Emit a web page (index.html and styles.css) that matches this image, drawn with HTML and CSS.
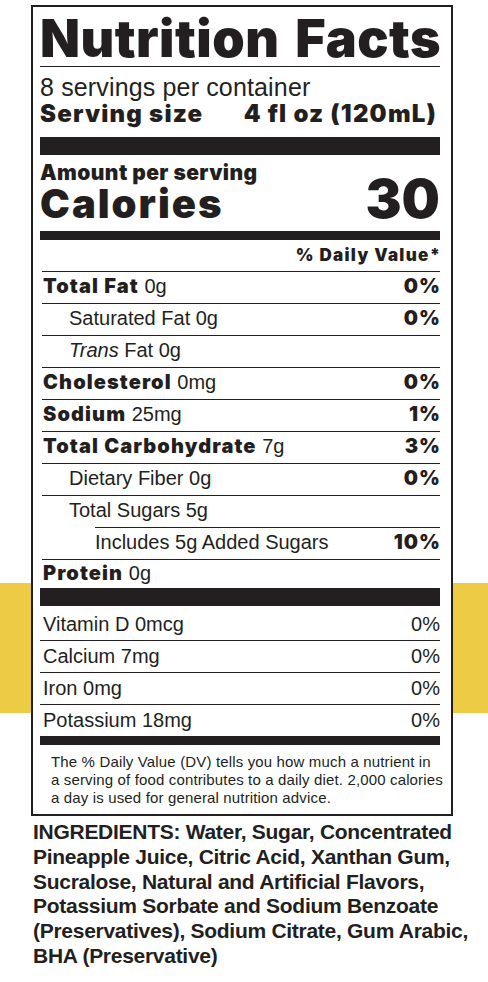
FILE: index.html
```html
<!DOCTYPE html>
<html lang="en">
<head>
<meta charset="utf-8">
<title>Nutrition Facts</title>
<link rel="stylesheet" href="styles.css">
</head>
<body>
<div class="label">
  <h1 class="title">Nutrition Facts</h1>
  <div class="servings">8 servings per container</div>
  <div class="serving-size"><span>Serving size</span><span>4 fl oz (120mL)</span></div>
  <div class="bar bar-thick"></div>
  <div class="amount">Amount per serving</div>
  <div class="calories"><span class="cal-label">Calories</span><span class="cal-value">30</span></div>
  <div class="bar bar-med"></div>
  <div class="dv-head"><span>% Daily Value*</span></div>
  <div class="nutrients">
    <div class="row"><span><b class="hv">Total Fat</b> 0g</span><b class="hv pct">0%</b></div>
    <div class="row sub"><span>Saturated Fat 0g</span><b class="hv pct">0%</b></div>
    <div class="row sub"><span><i>Trans</i> Fat 0g</span></div>
    <div class="row"><span><b class="hv">Cholesterol</b> 0mg</span><b class="hv pct">0%</b></div>
    <div class="row"><span><b class="hv">Sodium</b> 25mg</span><b class="hv pct">1%</b></div>
    <div class="row"><span><b class="hv">Total Carbohydrate</b> 7g</span><b class="hv pct">3%</b></div>
    <div class="row sub"><span>Dietary Fiber 0g</span><b class="hv pct">0%</b></div>
    <div class="row sub"><span>Total Sugars 5g</span></div>
    <div class="row sub2"><span>Includes 5g Added Sugars</span><b class="hv pct">10%</b></div>
    <div class="row last"><span><b class="hv">Protein</b> 0g</span></div>
  </div>
  <div class="bar bar-thick"></div>
  <div class="vitamins">
    <div class="vrow first"><span>Vitamin D 0mcg</span><span>0%</span></div>
    <div class="vrow"><span>Calcium 7mg</span><span>0%</span></div>
    <div class="vrow"><span>Iron 0mg</span><span>0%</span></div>
    <div class="vrow"><span>Potassium 18mg</span><span>0%</span></div>
  </div>
  <div class="bar bar-med"></div>
  <p class="footnote">The % Daily Value (DV) tells you how much a nutrient in<br>a serving of food contributes to a daily diet. 2,000 calories<br>a day is used for general nutrition advice.</p>
</div>
<p class="ingredients">INGREDIENTS: Water, Sugar, Concentrated<br>Pineapple Juice, Citric Acid, Xanthan Gum,<br>Sucralose, Natural and Artificial Flavors,<br>Potassium Sorbate and Sodium Benzoate<br>(Preservatives), Sodium Citrate, Gum Arabic,<br>BHA (Preservative)</p>
</body>
</html>
```
FILE: styles.css
```css
* { box-sizing: border-box; }
html, body { margin: 0; padding: 0; }
body {
  width: 488px;
  min-height: 982px;
  color: #231f20;
  font-family: "Liberation Sans", Arial, sans-serif;
  background: linear-gradient(to bottom, #ffffff 0, #ffffff 583px, #eecb45 583px, #eecb45 713px, #ffffff 713px);
  padding-top: 5px;
}
.label {
  margin-left: 31px;
  width: 422px;
  border: 2px solid #231f20;
  background: #fff;
  padding: 0 11px 7px 7px;
}
.title, .serving-size, .amount, .calories, .dv-head, .hv {
  font-family: "Inter", "Roboto", "Liberation Sans", sans-serif;
  font-weight: 900;
}
.title {
  margin: 0;
  padding-top: 4px;
  font-size: 52px;
  line-height: 55px;
  letter-spacing: 0.5px;
  word-spacing: 5px;
  border-bottom: 1px solid #231f20;
  white-space: nowrap;
}
.servings {
  padding-top: 5px;
  font-size: 25px;
  line-height: 30px;
  letter-spacing: 0.15px;
}
.serving-size {
  display: flex;
  justify-content: space-between;
  padding-right: 3px;
  font-size: 24px;
  line-height: 24px;
  letter-spacing: 1.2px;
}
.bar { background: #231f20; }
.bar-thick { height: 18px; }
.bar-med { height: 9px; }
.serving-size + .bar { margin-top: 11px; }
.amount {
  padding-top: 5px;
  font-size: 21px;
  line-height: 26px;
  letter-spacing: 0.4px;
}
.calories {
  display: flex;
  justify-content: space-between;
  align-items: baseline;
  margin-top: 1px;
}
.cal-label { font-size: 40px; line-height: 34px; letter-spacing: 2px; }
.cal-value { font-size: 54px; line-height: 24px; }
.calories + .bar { margin-top: 10px; }
.dv-head {
  text-align: right;
  font-size: 17px;
  line-height: 31px;
  letter-spacing: 1.3px;
}
.dv-head span { margin-right: -1.3px; }
.nutrients { padding-left: 2px; }
.row {
  display: flex;
  justify-content: space-between;
  align-items: baseline;
  border-top: 1px solid #231f20;
  font-size: 20px;
  line-height: 29px;
  padding: 0 0 2px 1px;
}
.row.sub { padding-left: 27px; }
.row.sub2 { margin-left: 53px; padding-left: 0; }
.row.last { line-height: 26px; }
.hv { font-size: 20px; letter-spacing: 1.1px; }
.pct { margin-right: -1.1px; }
i { font-style: italic; }
.vrow {
  display: flex;
  justify-content: space-between;
  align-items: baseline;
  border-top: 1px solid #231f20;
  font-size: 20px;
  line-height: 31px;
  padding-left: 3px;
}
.vrow.first {
  border-top: 0;
  padding-top: 4px;
  padding-bottom: 1px;
  line-height: 29px;
}
.footnote {
  margin: 0;
  padding: 8px 0 0 11px;
  font-size: 15px;
  line-height: 18px;
  letter-spacing: 0.15px;
  white-space: nowrap;
}
.ingredients {
  margin: 4px 0 0 33px;
  font-weight: 700;
  font-size: 21px;
  line-height: 24.8px;
  letter-spacing: -0.28px;
  white-space: nowrap;
}
```
